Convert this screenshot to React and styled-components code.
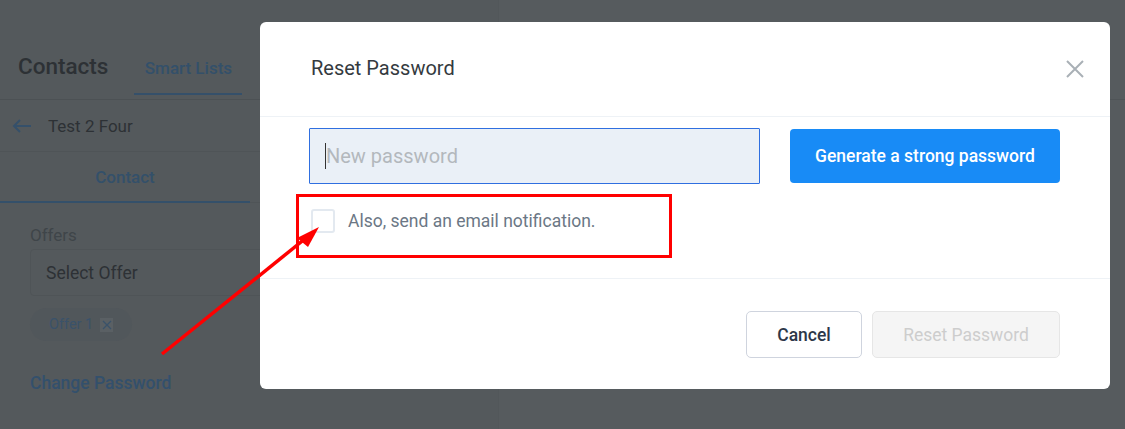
import styled, { createGlobalStyle } from "styled-components";

const GlobalStyle = createGlobalStyle`
  html, body {
    margin: 0;
    padding: 0;
    background: #565b5e;
    font-family: Roboto, "Liberation Sans", sans-serif;
  }
`;

const Page = styled.div`
  position: relative;
  width: 1125px;
  height: 429px;
  overflow: hidden;
  display: flex;
  background: #565b5e;
`;

// dimmed page behind the modal
const Sidebar = styled.div`
  width: 498px;
  border-right: 1px solid #52575a;
  background: #54595c;
  display: flex;
  flex-direction: column;
`;

const TopBar = styled.div`
  height: 99px;
  border-bottom: 1px solid #4c5154;
  display: flex;
  align-items: flex-end;
  padding-left: 18px;
  gap: 26px;
`;

const PageTitle = styled.div`
  font-size: 22.5px;
  font-weight: 500;
  color: #2d3135;
  line-height: 26px;
  padding-bottom: 20px;
`;

const TopTab = styled.div`
  width: 108px;
  text-align: center;
  font-size: 17px;
  font-weight: 500;
  color: #33506a;
  padding-bottom: 15px;
  border-bottom: 2px solid #35506a;
  margin-bottom: 4px;
`;

const BackRow = styled.div`
  height: 51px;
  border-bottom: 1px solid #4f5457;
  display: flex;
  align-items: center;
  padding-left: 12px;
  gap: 16px;
  font-size: 17px;
  color: #2d3135;
`;

const TabRow = styled.div`
  height: 50px;
  border-bottom: 1px solid #4f5457;
  display: flex;
`;

const Tab = styled.div`
  width: 250px;
  display: flex;
  align-items: center;
  justify-content: center;
  font-size: 17px;
  font-weight: 500;
  color: #33506a;
  border-bottom: 2px solid #34506a;
  margin-bottom: -1px;
`;

const Section = styled.div`
  padding: 22px 0 0 30px;
  display: flex;
  flex-direction: column;
  align-items: flex-start;
`;

const Label = styled.div`
  font-size: 17px;
  color: #3f4549;
  line-height: 20px;
  margin-bottom: 4px;
`;

const SelectBox = styled.div`
  width: 440px;
  height: 47px;
  box-sizing: border-box;
  border: 1px solid #4f5457;
  border-radius: 4px;
  display: flex;
  align-items: center;
  padding-left: 15px;
  font-size: 17.5px;
  color: #2d3135;
`;

const Chip = styled.div`
  margin-top: 12px;
  height: 33px;
  width: 102px;
  box-sizing: border-box;
  border-radius: 17px;
  background: #51575b;
  display: flex;
  align-items: center;
  padding-left: 19px;
  gap: 7px;
  font-size: 14.5px;
  color: #3a526a;
`;

const ChipX = styled.span`
  width: 13px;
  height: 14px;
  background: #5a6064;
  display: flex;
  align-items: center;
  justify-content: center;
`;

const LinkText = styled.div`
  margin-top: 32px;
  font-size: 17.5px;
  font-weight: 500;
  color: #33506c;
`;

const MainArea = styled.div`
  flex: 1;
  display: flex;
  flex-direction: column;
`;

const MainLine = styled.div`
  height: 99px;
  border-bottom: 1px solid #4f5457;
`;

// modal
const Modal = styled.div`
  position: absolute;
  left: 260px;
  top: 22px;
  width: 850px;
  height: 367px;
  background: #fff;
  border-radius: 6px;
  display: flex;
  flex-direction: column;
  z-index: 2;
`;

const ModalHeader = styled.div`
  height: 94px;
  border-bottom: 1px solid #eef2f6;
  display: flex;
  align-items: center;
  justify-content: space-between;
  padding: 0 26px 0 51px;
`;

const ModalTitle = styled.div`
  font-size: 20px;
  color: #343a40;
  margin-top: -2px;
`;

const CloseButton = styled.button`
  border: 0;
  background: none;
  padding: 0;
  width: 18px;
  height: 18px;
  display: flex;
  cursor: pointer;
`;

const ModalBody = styled.div`
  box-sizing: border-box;
  padding: 11px 50px 0 49px;
  height: 162px;
  border-bottom: 1px solid #eef2f6;
`;

const FieldRow = styled.div`
  display: flex;
  align-items: center;
  gap: 30px;
`;

const InputWrap = styled.div`
  position: relative;
  &::after {
    content: "";
    position: absolute;
    left: 16px;
    top: 15px;
    width: 1px;
    height: 26px;
    background: #333;
  }
`;

const PasswordInput = styled.input`
  display: block;
  width: 451px;
  height: 56px;
  box-sizing: border-box;
  background: #eaf0f7;
  border: 1px solid #2f6fe0;
  border-radius: 1px;
  padding: 0 16px;
  font-family: Roboto, "Liberation Sans", sans-serif;
  font-size: 20px;
  color: #333;
  outline: none;
  &::placeholder {
    color: #b3b8bd;
  }
`;

const PrimaryButton = styled.button`
  width: 270px;
  height: 54px;
  border: 0;
  border-radius: 4px;
  background: #188bf6;
  color: #fff;
  font-family: Roboto, "Liberation Sans", sans-serif;
  font-size: 17.5px;
  font-weight: 500;
  cursor: pointer;
`;

const CheckRow = styled.label`
  display: flex;
  align-items: center;
  gap: 13px;
  margin: 25px 0 0 2px;
  font-size: 17.5px;
  color: #6b7785;
`;

const CheckBox = styled.span`
  width: 24px;
  height: 24px;
  box-sizing: border-box;
  border: 2px solid #e3e9f0;
  border-radius: 3px;
`;

const ModalFooter = styled.div`
  flex: 1;
  display: flex;
  justify-content: flex-end;
  align-items: flex-start;
  gap: 10px;
  padding: 32px 50px 0 0;
`;

const FooterButton = styled.button`
  height: 47px;
  width: ${(p) => p.w}px;
  box-sizing: border-box;
  border-radius: 5px;
  font-family: Roboto, "Liberation Sans", sans-serif;
  font-size: 17.5px;
  font-weight: ${(p) => (p.disabled ? 400 : 500)};
  border: 1px solid ${(p) => (p.disabled ? "#e6e6e6" : "#cfd4de")};
  background: ${(p) => (p.disabled ? "#f5f5f5" : "#fff")};
  color: ${(p) => (p.disabled ? "#cdcdcd" : "#2d3748")};
`;

// annotation overlay
const Highlight = styled.div`
  position: absolute;
  left: 296px;
  top: 194px;
  width: 376px;
  height: 64px;
  box-sizing: border-box;
  border: 3px solid #ff0000;
  z-index: 3;
  pointer-events: none;
`;

const ArrowLayer = styled.svg`
  position: absolute;
  left: 0;
  top: 0;
  z-index: 3;
  pointer-events: none;
`;

export default function App() {
  return (
    <>
      <GlobalStyle />
      <Page>
        <Sidebar>
          <TopBar>
            <PageTitle>Contacts</PageTitle>
            <TopTab>Smart Lists</TopTab>
          </TopBar>
          <BackRow>
            <svg width="20" height="14" viewBox="0 0 20 14">
              <path d="M19 7H2M8 1L2 7l6 6" fill="none" stroke="#35506a" strokeWidth="2" />
            </svg>
            Test 2 Four
          </BackRow>
          <TabRow>
            <Tab>Contact</Tab>
          </TabRow>
          <Section>
            <Label>Offers</Label>
            <SelectBox>Select Offer</SelectBox>
            <Chip>
              Offer 1
              <ChipX>
                <svg width="10" height="10" viewBox="0 0 10 10">
                  <path d="M1 1l8 8M9 1L1 9" stroke="#3a526a" strokeWidth="1.3" />
                </svg>
              </ChipX>
            </Chip>
            <LinkText>Change Password</LinkText>
          </Section>
        </Sidebar>
        <MainArea>
          <MainLine />
        </MainArea>

        <Modal>
          <ModalHeader>
            <ModalTitle>Reset Password</ModalTitle>
            <CloseButton aria-label="Close">
              <svg width="18" height="18" viewBox="0 0 18 18">
                <path d="M1 1l16 16M17 1L1 17" stroke="#a9b0b6" strokeWidth="2" />
              </svg>
            </CloseButton>
          </ModalHeader>
          <ModalBody>
            <FieldRow>
              <InputWrap>
                <PasswordInput placeholder="New password" />
              </InputWrap>
              <PrimaryButton>Generate a strong password</PrimaryButton>
            </FieldRow>
            <CheckRow>
              <CheckBox />
              Also, send an email notification.
            </CheckRow>
          </ModalBody>
          <ModalFooter>
            <FooterButton w={116}>Cancel</FooterButton>
            <FooterButton w={188} disabled>
              Reset Password
            </FooterButton>
          </ModalFooter>
        </Modal>

        <Highlight />
        <ArrowLayer width="1125" height="429">
          <line x1="162" y1="354" x2="306" y2="238" stroke="#ff0000" strokeWidth="3.5" />
          <polygon points="319,227 297,238 308,247" fill="#ff0000" />
        </ArrowLayer>
      </Page>
    </>
  );
}
